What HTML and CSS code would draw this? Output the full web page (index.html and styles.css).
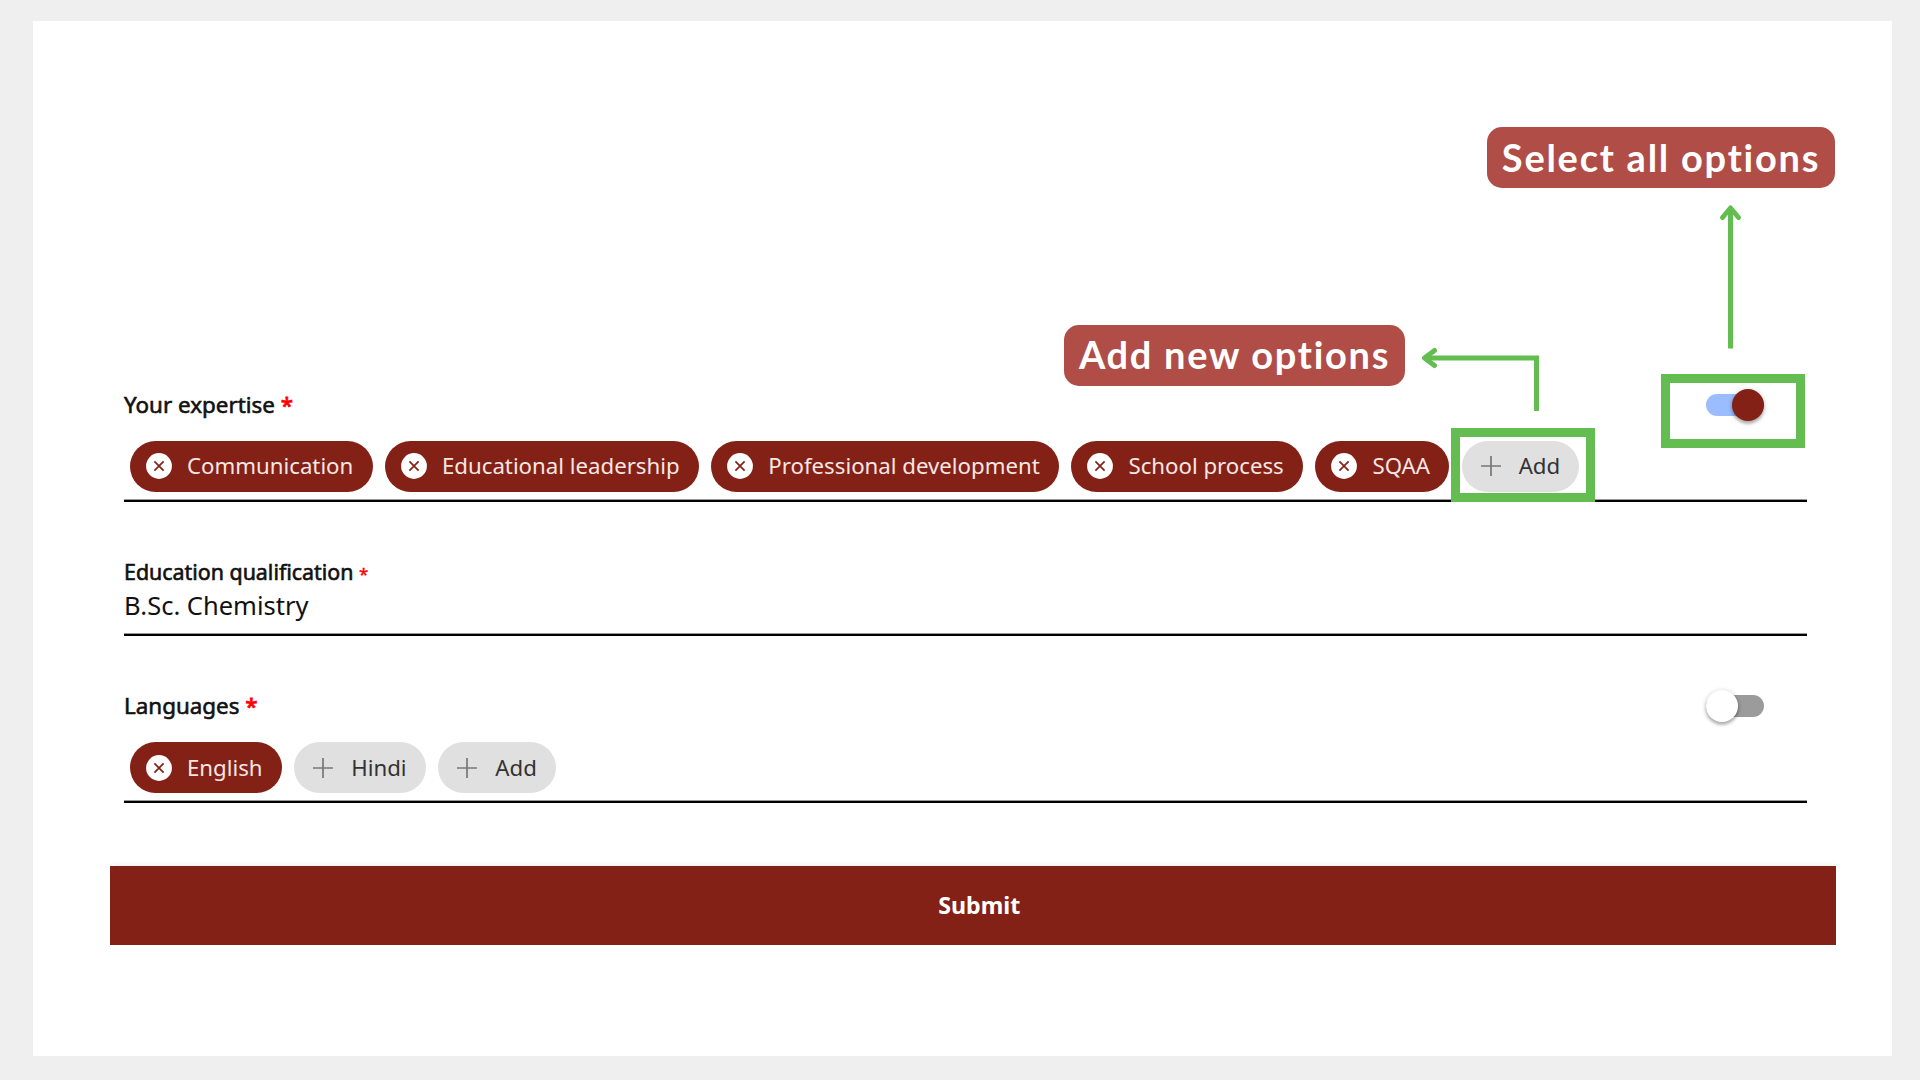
FILE: index.html
```html
<!DOCTYPE html>
<html lang="en">
<head>
<meta charset="utf-8">
<title>Profile form</title>
<link rel="stylesheet" href="styles.css">
</head>
<body>
<svg class="symbols" aria-hidden="true">
  <symbol id="close" viewBox="0 0 26 26"><circle cx="13" cy="13" r="12.9" fill="#fff"/><path d="M8.4 8.4l9.2 9.2M17.6 8.4l-9.2 9.2" stroke="#832116" stroke-width="1.7"/></symbol>
  <symbol id="plus" viewBox="0 0 26 26"><path d="M3 13h20M13 3v20" stroke="#777" stroke-width="1.7"/></symbol>
</svg>
<main class="card">
  <form class="form">
    <section class="field expertise">
      <div class="head"><span class="label">Your expertise <b class="req">*</b></span><span class="toggle on"><i class="knob"></i></span></div>
      <div class="chips">
        <span class="chip selected"><svg class="icon"><use href="#close"/></svg>Communication</span>
        <span class="chip selected"><svg class="icon"><use href="#close"/></svg>Educational leadership</span>
        <span class="chip selected"><svg class="icon"><use href="#close"/></svg>Professional development</span>
        <span class="chip selected"><svg class="icon"><use href="#close"/></svg>School process</span>
        <span class="chip selected"><svg class="icon"><use href="#close"/></svg>SQAA</span>
        <span class="chip"><svg class="icon"><use href="#plus"/></svg>Add</span>
      </div>
    </section>
    <section class="field education">
      <span class="label small">Education qualification <b class="req">*</b></span>
      <span class="value">B.Sc. Chemistry</span>
    </section>
    <section class="field languages">
      <div class="head"><span class="label">Languages <b class="req">*</b></span><span class="toggle"><i class="knob"></i></span></div>
      <div class="chips">
        <span class="chip selected"><svg class="icon"><use href="#close"/></svg>English</span>
        <span class="chip"><svg class="icon"><use href="#plus"/></svg>Hindi</span>
        <span class="chip"><svg class="icon"><use href="#plus"/></svg>Add</span>
      </div>
    </section>
  </form>
  <button class="submit" type="button">Submit</button>
</main>
<div class="callout select-all">Select all options</div>
<div class="callout add-new">Add new options</div>
<div class="frame frame-toggle"></div>
<div class="frame frame-add"></div>
<svg class="arrows" viewBox="0 0 1920 1080" fill="none" stroke="#63bd50" stroke-width="5">
  <path d="M1730.5 348.5V209"/>
  <path d="M1722.5 217.5l8-9.5 8 9.5" stroke-linecap="round" stroke-linejoin="round"/>
  <path d="M1536.5 411V358H1426"/>
  <path d="M1434.5 350.5l-10 7.5 10 7.5" stroke-linecap="round" stroke-linejoin="round"/>
</svg>
</body>
</html>
```
FILE: styles.css
```css
* { box-sizing: border-box; }

body {
  margin: 0;
  height: 1080px;
  padding: 20.6px 28px 24px 33px;
  overflow: hidden;
  background: #efefef;
  font-family: "Noto Sans", sans-serif;
  color: #111;
}

.symbols { position: absolute; width: 0; height: 0; }

.card {
  height: 1035.4px;
  padding: 361.4px 55.6px 0 77px;
  background: #fff;
}

.form { padding: 0 29.3px 0 14px; }

.field {
  display: flex;
  flex-direction: column;
  border-bottom: 2px solid #000;
  box-shadow: inset 0 -1px rgba(0, 0, 0, .4);
}

.expertise { height: 120px; }
.education { height: 134px; padding-top: 54px; }
.languages { height: 167px; padding-top: 47px; }

.head {
  display: flex;
  justify-content: space-between;
  align-items: center;
  height: 46px;
  padding-right: 43.5px;
}

.label {
  font-size: 22.4px;
  line-height: 32px;
  white-space: pre;
  -webkit-text-stroke: 0.6px #111;
}

.label.small { font-size: 21.4px; }
.req { color: #f00; font-weight: 400; -webkit-text-stroke: 0.8px #f00; }
.small .req { font-size: 17px; -webkit-text-stroke-width: 0.4px; }

.value { font-size: 25.5px; line-height: 30px; }

.chips {
  display: flex;
  gap: 12.4px;
  padding: 12.8px 0 0 6px;
}

.chip {
  display: flex;
  align-items: center;
  height: 51px;
  padding: 0 19.3px 0 16px;
  border-radius: 26px;
  background: #e0e0e0;
  color: #333;
  font-size: 22.22px;
  white-space: nowrap;
}

.expertise .chip { padding-bottom: 1px; }
.expertise .icon { margin-top: 1px; }
.languages .chips { padding-top: 13.2px; }

.chip.selected { background: #832116; color: #f5e6e4; }
.icon { width: 26px; height: 26px; margin-right: 15px; }

.toggle {
  display: flex;
  align-items: center;
  width: 58px;
  height: 22.5px;
  border-radius: 12px;
  background: #9b9b9b;
}

.toggle.on { justify-content: flex-end; background: #9bbdff; }

.knob {
  flex: none;
  width: 32px;
  height: 32px;
  border-radius: 50%;
  background: #fff;
  box-shadow: 0 3px 3px rgba(0, 0, 0, .2), 0 1px 5px rgba(0, 0, 0, .24);
}

.on .knob { background: #832116; }

.submit {
  display: block;
  width: 100%;
  height: 79px;
  margin-top: 63px;
  padding: 0 0 0 12px;
  border: 0;
  background: #832116;
  box-shadow: 0 -4px 4px -2px rgba(0, 0, 0, .06);
  color: #fff;
  font: bold 23.2px "Noto Sans", sans-serif;
}

.callout {
  position: absolute;
  height: 61px;
  border-radius: 15px;
  background: #b14d47;
  color: #fff;
  font: bold 38px/60px Lato, sans-serif;
  text-align: center;
  white-space: nowrap;
}

.select-all { left: 1487px; top: 127px; width: 348px; letter-spacing: 1.75px; }
.add-new { left: 1064px; top: 324.5px; width: 341px; line-height: 58px; letter-spacing: 1.7px; }

.frame { position: absolute; width: 144px; height: 73.5px; border: 9px solid #63bd50; }
.frame-toggle { left: 1661px; top: 374px; }
.frame-add { left: 1451px; top: 428px; }

.arrows { position: absolute; left: 0; top: 0; width: 1920px; height: 1080px; }
```
